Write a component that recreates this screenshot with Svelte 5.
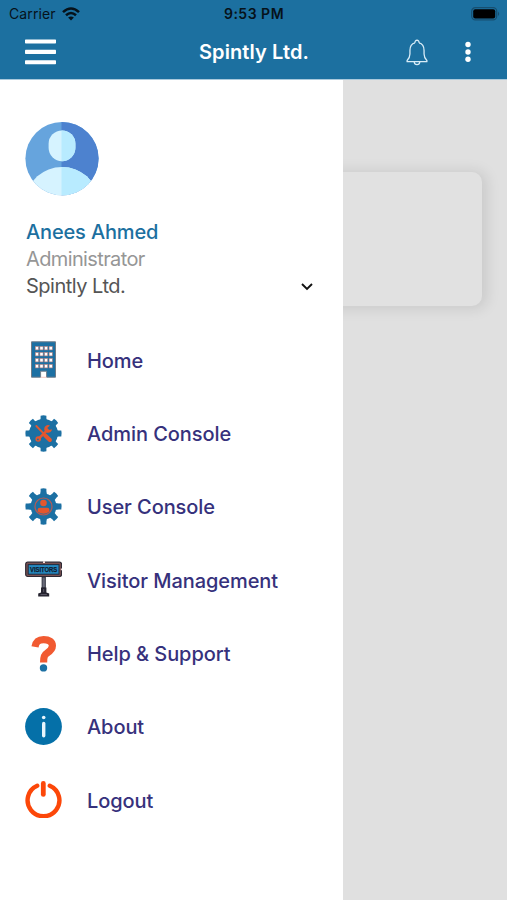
<script>
  const user = { name: 'Anees Ahmed', role: 'Administrator', company: 'Spintly Ltd.' };

  const items = [
    { icon: 'home', label: 'Home' },
    { icon: 'admin', label: 'Admin Console' },
    { icon: 'user', label: 'User Console' },
    { icon: 'visitor', label: 'Visitor Management' },
    { icon: 'help', label: 'Help & Support' },
    { icon: 'about', label: 'About' },
    { icon: 'logout', label: 'Logout' },
  ];

  const teeth = [0, 45, 90, 135, 180, 225, 270, 315];
  const floors = [5.5, 11.5, 17.5, 23.5];
  const columns = [10.3, 14.9, 19.5, 24.1];
</script>

{#snippet gear(radius)}
  <circle cx="18.5" cy="18.5" r={radius} fill="#1c70a3" />
  {#each teeth as angle}
    <path
      d="M15 7L15.6 3.2V0.7Q18.5 0 21.4 0.7V3.2L22 7Z"
      fill="#1c70a3"
      transform="rotate({angle} 18.5 18.5)"
    />
  {/each}
{/snippet}

<div class="screen">
  <header>
    <div class="status">
      <div class="carrier">
        <span>Carrier</span>
        <svg width="18" height="14" viewBox="0 0 18 14" fill="none" stroke="#06121a" stroke-width="2.6">
          <path d="M1 5.1Q9 -2.1 17 5.1" />
          <path d="M4 8.2Q9 3.8 14 8.2" />
          <path d="M9 13.6L6.1 10.6Q9 8.2 11.9 10.6Z" fill="#06121a" stroke="none" />
        </svg>
      </div>
      <span class="time">9:53 PM</span>
      <svg class="battery" width="30" height="14" viewBox="0 0 30 14">
        <rect x="0.7" y="0.7" width="25" height="12.2" rx="3.6" fill="none" stroke="#174f70" stroke-width="1.2" />
        <rect x="2.2" y="2.2" width="22" height="9.2" rx="2" fill="#000" />
        <path d="M27 4.5Q29.4 6.8 27 9.1Z" fill="#174f70" />
      </svg>
    </div>
    <div class="bar">
      <svg class="burger" width="31" height="26" viewBox="0 0 31 26" fill="#fff">
        <rect y="0.4" width="31" height="4.1" rx="0.7" />
        <rect y="10.8" width="31" height="4.1" rx="0.7" />
        <rect y="21.2" width="31" height="4.1" rx="0.7" />
      </svg>
      <h1>Spintly Ltd.</h1>
      <div class="actions">
        <svg width="22" height="27" viewBox="0 0 24 28" preserveAspectRatio="none" fill="none" stroke="#d9edf8" stroke-width="1.4" stroke-linejoin="round">
          <path d="M9.8 4.1C5.8 5 4.3 8 4.3 12V15.5C4.3 19.3 2.8 20.7 1.2 22.2V23.5H22.8V22.2C21.2 20.7 19.7 19.3 19.7 15.5V12C19.7 8 18.2 5 14.2 4.1" />
          <path d="M9.8 4.1C9.3 0.3 14.7 0.3 14.2 4.1" />
          <path d="M9 23.8C9.3 27.5 14.7 27.5 15 23.8" />
        </svg>
        <svg width="6" height="22" viewBox="0 0 6 22" fill="#fff">
          <circle cx="3" cy="3.5" r="2.7" />
          <circle cx="3" cy="11" r="2.7" />
          <circle cx="3" cy="18.3" r="2.7" />
        </svg>
      </div>
    </div>
  </header>

  <div class="body">
    <aside>
      <svg class="avatar" width="74" height="74" viewBox="0 0 74 74">
        <defs>
          <clipPath id="disc"><circle cx="37" cy="36.6" r="36.6" /></clipPath>
          <clipPath id="right"><rect x="36.5" width="38" height="74" /></clipPath>
        </defs>
        <g clip-path="url(#disc)">
          <rect width="74" height="74" fill="#66a4dd" />
          <rect x="36.5" width="38" height="74" fill="#4d82cf" />
          <g fill="#d6f3ff">
            <rect x="23.6" y="8.4" width="26.8" height="30.8" rx="13.4" />
            <ellipse cx="37" cy="77" rx="35" ry="32" />
          </g>
          <g fill="#b8ebff" clip-path="url(#right)">
            <rect x="23.6" y="8.4" width="26.8" height="30.8" rx="13.4" />
            <ellipse cx="37" cy="77" rx="35" ry="32" />
          </g>
        </g>
      </svg>

      <div class="name">{user.name}</div>
      <div class="role">{user.role}</div>
      <div class="company">
        <span>{user.company}</span>
        <svg width="12" height="8" viewBox="0 0 12 8" fill="none" stroke="#111" stroke-width="1.9">
          <path d="M1 1L6 5.9L11 1" />
        </svg>
      </div>

      <nav>
        {#each items as item (item.icon)}
          <div class="item">
            <svg width="37" height="37" viewBox="0 0 37 37">
              {#if item.icon === 'home'}
                <path d="M6.5 0.8H30.5V36.2H21.6V30.2H15.6V36.2H6.5Z" fill="#1c70a3" stroke="#707c89" stroke-width="1" />
                <path d="M15.8 36.3H21.4" stroke="#f1b6ae" stroke-width="0.8" />
                {#each floors as y}
                  {#each columns as x}
                    <rect {x} {y} width="3.2" height="3.4" fill="#fff" stroke="#b77f7d" stroke-width="0.6" />
                  {/each}
                {/each}
              {:else if item.icon === 'admin'}
                {@render gear(14.4)}
                <path d="M11.3 11L18.5 18.4" stroke="#e4572e" stroke-width="1.8" stroke-linecap="round" />
                <path d="M20 20.2L24.9 25" stroke="#e4572e" stroke-width="4" stroke-linecap="round" />
                <path d="M13.7 23.6L23 14.4" stroke="#e4572e" stroke-width="2.6" />
                <path d="M25 10.5A3.9 3.9 0 1 0 27 14.2L24.2 15L22.2 13Z" fill="#e4572e" />
                <circle cx="13.2" cy="24" r="2.8" fill="#e4572e" />
                <circle cx="12.9" cy="24.4" r="0.9" fill="#1c70a3" />
              {:else if item.icon === 'user'}
                {@render gear(13)}
                <circle cx="18.5" cy="18.5" r="8.5" fill="none" stroke="#b65a53" stroke-width="1.2" />
                <circle cx="18.5" cy="15" r="3.3" fill="#e4572e" />
                <path d="M12.6 23.4V22Q12.6 19.8 14.8 19.8H22.2Q24.4 19.8 24.4 22V23.4Q18.5 28 12.6 23.4Z" fill="#e4572e" />
              {:else if item.icon === 'visitor'}
                <rect x="0.7" y="1.2" width="35.8" height="14.3" rx="2" fill="#795050" stroke="#2e2934" stroke-width="1.2" />
                <rect x="3.2" y="3.6" width="30.8" height="9.6" fill="#2489c1" stroke="#202c40" stroke-width="1" />
                <path d="M18 1.1H20M36.6 7.6V9.2" stroke="#f3dede" stroke-width="1.6" />
                <text class="sign" x="18.6" y="10.9" text-anchor="middle" textLength="27" lengthAdjust="spacingAndGlyphs">VISITORS</text>
                <rect x="17.1" y="16" width="3.2" height="11" fill="#686a78" stroke="#292b37" stroke-width="0.9" />
                <path d="M16 26.4H21.4V31.6L24.2 32.6V35.4H13.2V32.6L16 31.6Z" fill="#25232f" />
                <path d="M18.7 28V31.2M15.5 33.6H21.9" stroke="#6b6977" stroke-width="0.8" />
              {:else if item.icon === 'help'}
                <path d="M10 11.8C11 6.4 13.6 4.6 18.6 4.6C24.2 4.6 27.4 7 27.4 10.8C27.4 14.4 25 16.2 22.2 18C19.4 19.8 18.6 21.6 18.6 27.4" fill="none" stroke="#f15a31" stroke-width="7.2" />
                <circle cx="18.5" cy="32.9" r="3.7" fill="#1c70a3" />
              {:else if item.icon === 'about'}
                <circle cx="18.5" cy="18.5" r="18.4" fill="#0570a8" />
                <circle cx="18.7" cy="9.5" r="1.8" fill="#e8f5fc" />
                <path d="M18.7 15.4V27.8" stroke="#e8f5fc" stroke-width="3.4" stroke-linecap="round" />
              {:else if item.icon === 'logout'}
                <path d="M12.2 4.7A15.9 15.9 0 1 0 24.8 4.7" fill="none" stroke="#fc4709" stroke-width="4.4" stroke-linecap="round" />
                <path d="M18.3 2.5V13.4" stroke="#fc4709" stroke-width="4.8" stroke-linecap="round" />
              {/if}
            </svg>
            <span>{item.label}</span>
          </div>
        {/each}
      </nav>
    </aside>
    <main>
      <div class="card"></div>
    </main>
  </div>
</div>

<style>
  :global(body) {
    margin: 0;
  }
  .screen {
    width: 507px;
    height: 900px;
    overflow: hidden;
    display: flex;
    flex-direction: column;
    font-family: Inter, 'Liberation Sans', sans-serif;
    background: #fff;
  }
  svg {
    display: block;
    flex: none;
  }
  header {
    height: 80px;
    background: #1c70a0;
    border-bottom: 1px solid #a9c9dc;
    box-sizing: border-box;
  }
  .status {
    height: 27px;
    display: grid;
    grid-template-columns: 1fr auto 1fr;
    align-items: center;
    padding: 0 6px 0 9px;
    box-sizing: border-box;
    font-size: 14px;
    color: #06121a;
  }
  .carrier {
    display: flex;
    align-items: center;
    gap: 6px;
    letter-spacing: 0.1px;
  }
  .time {
    font-weight: 600;
    letter-spacing: 0.5px;
    padding-right: 2px;
  }
  .battery {
    justify-self: end;
  }
  .bar {
    height: 50px;
    display: grid;
    grid-template-columns: 1fr auto 1fr;
    align-items: center;
    padding: 0 36px 0 25px;
    box-sizing: border-box;
  }
  h1 {
    margin: 0;
    padding: 0 0 0 12px;
    font-size: 20px;
    font-weight: 600;
    letter-spacing: 0.1px;
    color: #fff;
    white-space: nowrap;
  }
  .actions {
    display: flex;
    justify-content: flex-end;
    align-items: center;
    gap: 37px;
  }
  .body {
    flex: 1;
    display: flex;
    min-height: 0;
  }
  aside {
    width: 343px;
    box-sizing: border-box;
    padding: 42px 30px 0 25px;
    background: #fff;
    white-space: nowrap;
  }
  .name,
  .role,
  .company {
    height: 27px;
    line-height: 27px;
    font-size: 20px;
    padding-left: 1px;
  }
  .name {
    margin-top: 23px;
    font-weight: 500;
    letter-spacing: -0.15px;
    color: #1c70a0;
  }
  .role {
    letter-spacing: -0.62px;
    color: #969696;
  }
  .company {
    display: flex;
    align-items: center;
    justify-content: space-between;
    letter-spacing: -0.5px;
    color: #555;
  }
  nav {
    margin-top: 24px;
  }
  .item {
    height: 73.35px;
    display: flex;
    align-items: center;
    gap: 25px;
    font-size: 20px;
    font-weight: 500;
    letter-spacing: -0.07px;
    color: #36317c;
  }
  .item svg {
    margin-bottom: 2px;
  }
  .sign {
    font-family: 'Liberation Sans', sans-serif;
    font-size: 6.8px;
    font-weight: 700;
    fill: #101b30;
    stroke: #101b30;
    stroke-width: 0.25px;
  }
  main {
    flex: 1;
    overflow: hidden;
    background: #e0e0e0;
    padding-top: 92px;
  }
  .card {
    height: 134px;
    margin-left: -40px;
    margin-right: 25px;
    border-radius: 10px;
    background: #e1e1e1;
    box-shadow: 3px 1px 14px 2px rgba(0, 0, 0, 0.1);
  }
</style>
